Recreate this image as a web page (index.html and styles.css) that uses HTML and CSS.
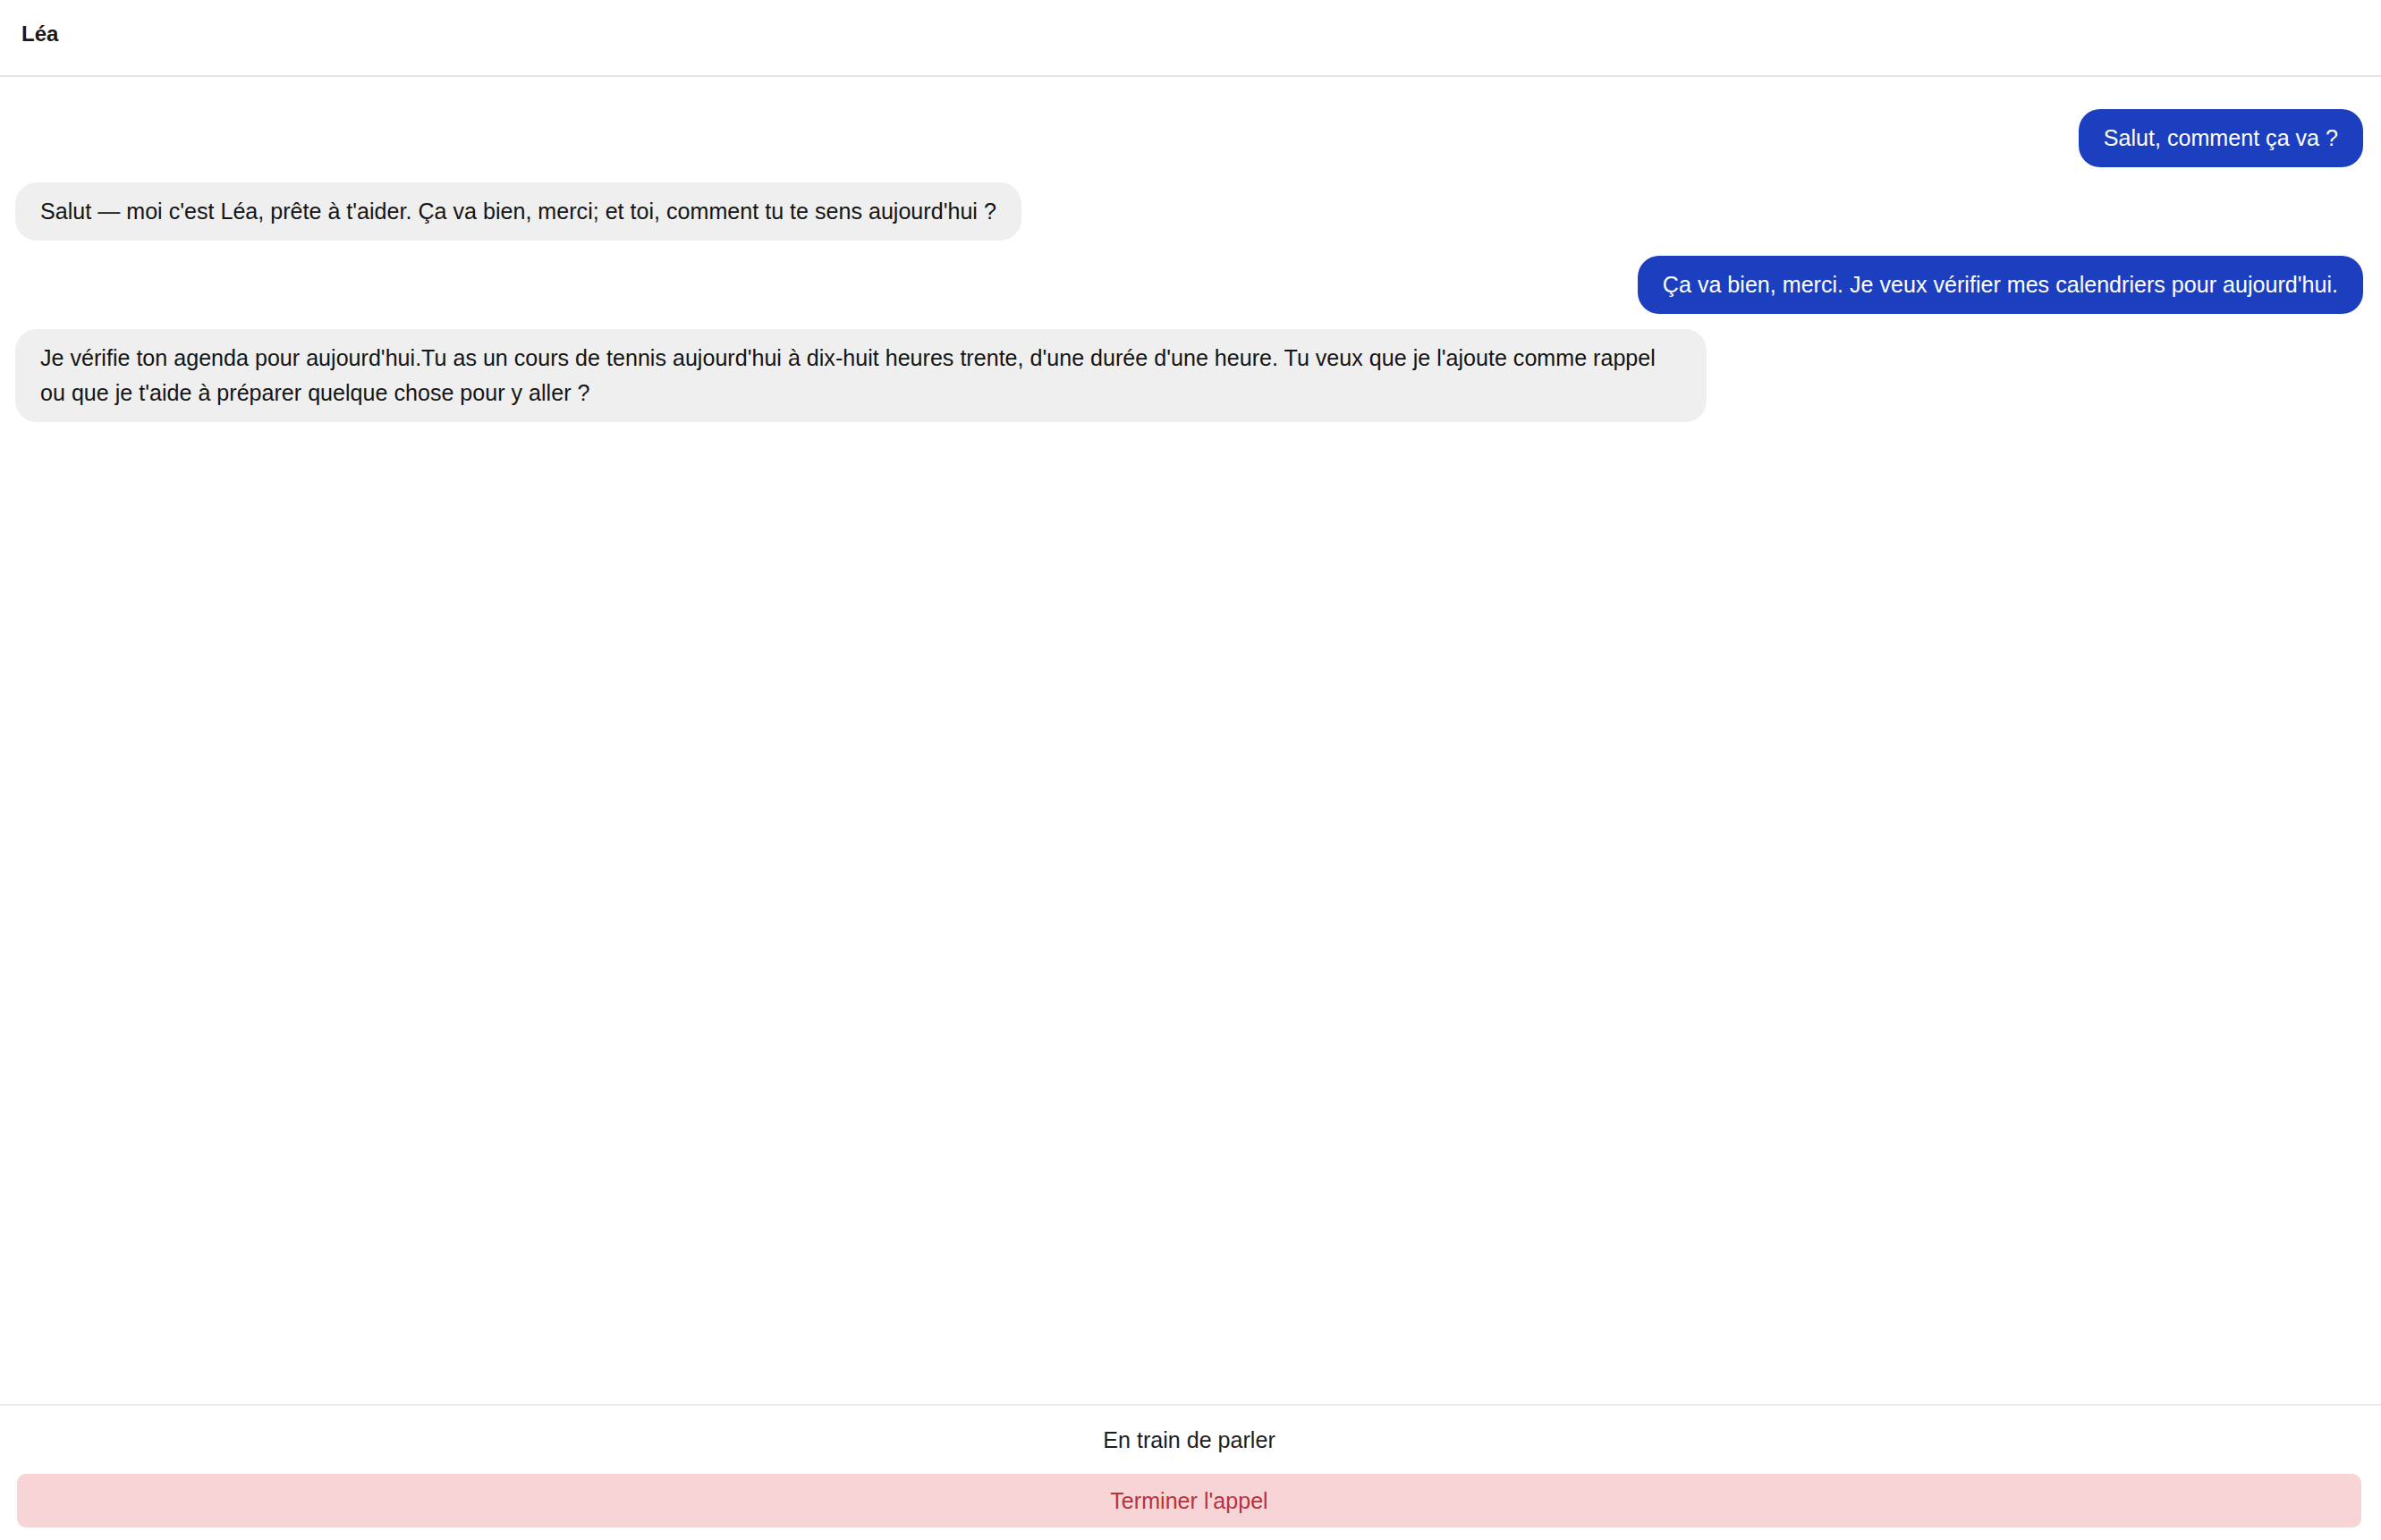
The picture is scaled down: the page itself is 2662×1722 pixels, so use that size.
FILE: index.html
```html
<!DOCTYPE html>
<html lang="fr">
<head>
<meta charset="utf-8">
<title>Léa</title>
<link rel="stylesheet" href="styles.css">
</head>
<body>
<div class="app">
  <header class="header">Léa</header>
  <main class="messages">
    <div class="msg msg-user">Salut, comment ça va ?</div>
    <div class="msg msg-bot">Salut — moi c'est Léa, prête à t'aider. Ça va bien, merci; et toi, comment tu te sens aujourd'hui ?</div>
    <div class="msg msg-user">Ça va bien, merci. Je veux vérifier mes calendriers pour aujourd'hui.</div>
    <div class="msg msg-bot">Je vérifie ton agenda pour aujourd'hui.Tu as un cours de tennis aujourd'hui à dix-huit heures trente, d'une durée d'une heure. Tu veux que je l'ajoute comme rappel ou que je t'aide à préparer quelque chose pour y aller ?</div>
  </main>
  <footer class="footer">
    <div class="status">En train de parler</div>
    <button class="end-call" type="button">Terminer l'appel</button>
  </footer>
</div>
</body>
</html>
```

FILE: styles.css
```css
* { box-sizing: border-box; }

html, body {
  margin: 0;
  padding: 0;
  height: 100%;
  background: #ffffff;
}

body {
  font-family: "Liberation Sans", Arial, Helvetica, sans-serif;
  font-size: 25.1px;
  color: #151515;
}

.app {
  display: flex;
  flex-direction: column;
  height: 100vh;
}

.header {
  height: 86px;
  padding: 18px 24px 0;
  line-height: 39px;
  font-size: 24px;
  font-weight: 600;
  color: #1a1a1a;
  border-bottom: 2px solid #e6e6e6;
  flex: none;
}

.messages {
  flex: 1;
  display: flex;
  flex-direction: column;
  align-items: flex-start;
  gap: 17px;
  padding: 36px 20px 17px 17px;
  overflow: hidden;
}

.msg {
  padding: 13px 28px;
  line-height: 39px;
  border-radius: 24px;
  max-width: 1891px;
}

.msg-user {
  align-self: flex-end;
  background: #1c3fbf;
  color: #ffffff;
}

.msg-bot {
  background: #efefef;
  color: #151515;
}

.footer {
  flex: none;
  border-top: 2px solid #ececec;
  padding: 19px 22px 14px 19px;
  display: flex;
  flex-direction: column;
  align-items: stretch;
  gap: 19px;
}

.status {
  text-align: center;
  line-height: 38px;
  color: #1e1e1e;
}

.end-call {
  height: 60px;
  border: none;
  border-radius: 10px;
  background: #f7d5d6;
  color: #b8323a;
  font-family: inherit;
  font-size: inherit;
  cursor: pointer;
}
```
